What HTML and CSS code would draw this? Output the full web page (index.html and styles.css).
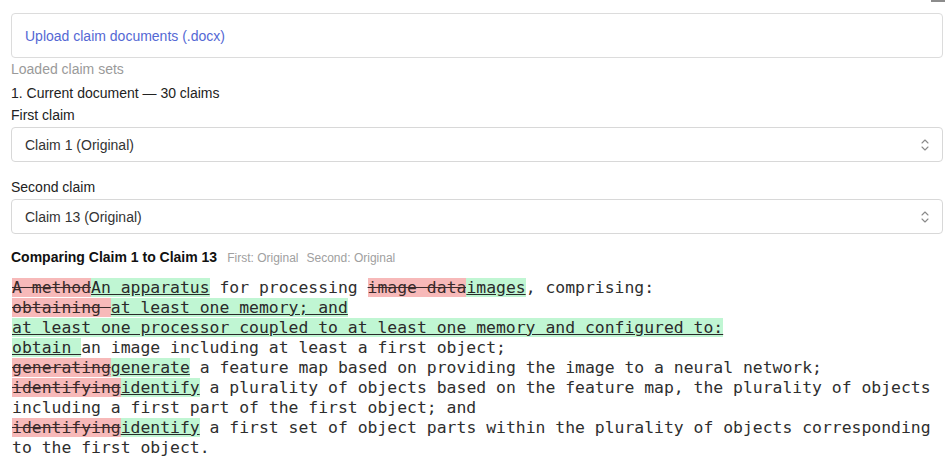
FILE: index.html
```html
<!DOCTYPE html>
<html>
<head>
<meta charset="utf-8">
<link rel="stylesheet" href="styles.css">
</head>
<body>
<div class="topbar"><span class="topbtn"></span></div>
<div class="upload">Upload claim documents (.docx)</div>
<div class="muted">Loaded claim sets</div>
<div class="setitem">1. Current document — 30 claims</div>
<div class="label">First claim</div>
<div class="select"><span>Claim 1 (Original)</span>
<svg class="chev" width="10" height="14" viewBox="0 0 10 14"><path d="M2 5 L5 2 L8 5 M2 9 L5 12 L8 9" fill="none" stroke="#8a8a8a" stroke-width="1.1" stroke-linecap="round" stroke-linejoin="round"/></svg></div>
<div class="label second">Second claim</div>
<div class="select"><span>Claim 13 (Original)</span>
<svg class="chev" width="10" height="14" viewBox="0 0 10 14"><path d="M2 5 L5 2 L8 5 M2 9 L5 12 L8 9" fill="none" stroke="#8a8a8a" stroke-width="1.1" stroke-linecap="round" stroke-linejoin="round"/></svg></div>
<div class="heading"><strong>Comparing Claim 1 to Claim 13</strong><span class="meta">First: Original</span><span class="meta">Second: Original</span></div>
<div class="diff"><del>A method</del><ins>An apparatus</ins> for processing <del>image data</del><ins>images</ins>, comprising:
<del>obtaining </del><ins>at least one memory; and
at least one processor coupled to at least one memory and configured to:
obtain </ins>an image including at least a first object;
<del>generating</del><ins>generate</ins> a feature map based on providing the image to a neural network;
<del>identifying</del><ins>identify</ins> a plurality of objects based on the feature map, the plurality of objects including a first part of the first object; and
<del>identifying</del><ins>identify</ins> a first set of object parts within the plurality of objects corresponding to the first object.</div>
</body>
</html>
```
FILE: styles.css
```css
html, body {
  margin: 0;
  padding: 0;
  background: #ffffff;
}
body {
  padding: 0 2px 0 11px;
  font-family: "Liberation Sans", Arial, Helvetica, sans-serif;
  font-size: 14px;
  color: #222222;
}
.topbar {
  height: 2px;
  display: flex;
  justify-content: flex-end;
  margin-right: -2px;
}
.topbtn {
  width: 14px;
  height: 2px;
  background: #8c8c8c;
}
.upload {
  margin-top: 11px;
  border: 1px solid #dcdcdc;
  border-radius: 4px;
  display: flex;
  align-items: center;
  padding: 1px 0 0 13px;
  box-sizing: content-box;
  height: 42px;
  color: #5468d4;
}
.muted {
  margin-top: 3px;
  line-height: 16px;
  color: #9a9a9a;
}
.setitem {
  margin-top: 8px;
  line-height: 16px;
  color: #222;
}
.label {
  margin-top: 6px;
  line-height: 16px;
  color: #222;
}
.label.second {
  margin-top: 17px;
}
.select {
  margin-top: 4px;
  height: 33px;
  border: 1px solid #d8d8d8;
  border-radius: 4px;
  display: flex;
  align-items: center;
  justify-content: space-between;
  padding: 0 12px 0 13px;
  color: #333;
}
.chev {
  display: block;
}
.heading {
  margin-top: 15px;
  line-height: 16px;
  display: flex;
  align-items: baseline;
}
.heading strong {
  font-weight: bold;
  color: #111;
  margin-right: 10px;
}
.meta {
  font-size: 12px;
  color: #a0a0a0;
  margin-right: 8px;
}
.diff {
  margin-top: 12px;
  margin-left: 1px;
  font-family: "DejaVu Sans Mono", "Liberation Mono", monospace;
  font-size: 16.42px;
  line-height: 20px;
  white-space: pre-wrap;
  color: #2e2e2e;
}
.diff del {
  background: #f7b9b9;
  text-decoration: line-through;
  color: #3a2a2a;
}
.diff ins {
  background: #c0f6d3;
  text-decoration: underline;
  color: #2a2a2a;
}
```
